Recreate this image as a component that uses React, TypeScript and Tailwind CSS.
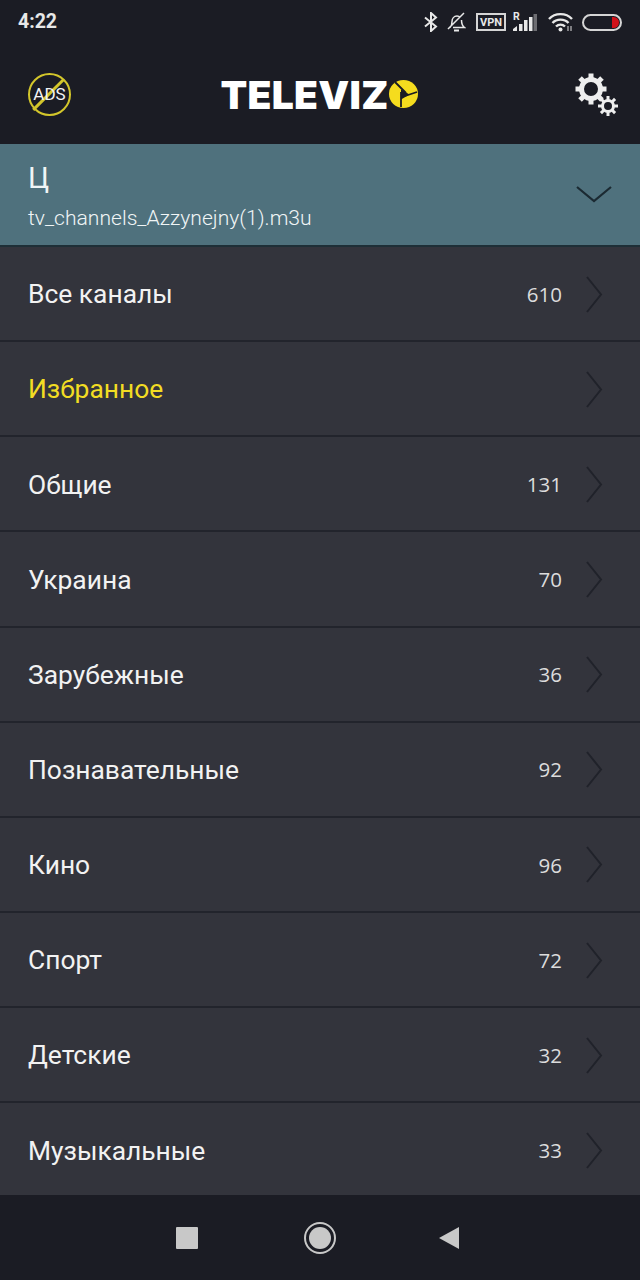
const rows = [
  { name: "Все каналы", count: "610" },
  { name: "Избранное", count: "", fav: true },
  { name: "Общие", count: "131" },
  { name: "Украина", count: "70" },
  { name: "Зарубежные", count: "36" },
  { name: "Познавательные", count: "92" },
  { name: "Кино", count: "96" },
  { name: "Спорт", count: "72" },
  { name: "Детские", count: "32" },
  { name: "Музыкальные", count: "33" },
];

function StatusBar() {
  return (
    <div className="flex h-[44px] items-center justify-between pl-[18px] pr-[18px] text-[#e8e8e8]">
      <span className="text-[19.5px] font-bold">4:22</span>
      <div className="flex items-center">
        <svg width="14" height="20" viewBox="0 0 14 20" fill="none" stroke="currentColor" strokeWidth="2">
          <path d="M1 5.5l11 9-5 4.5V1l5 4.5-11 9" />
        </svg>
        <svg className="ml-[9px]" width="19" height="20" viewBox="0 0 19 20" fill="none" stroke="currentColor" strokeWidth="1.5">
          <path d="M1 17L17 1M3 15.5c1.500-1.500 2-3 2-6 0-3 2-5.500 5-5.500 1.500 0 2.500.5 3.500 1.500M14.500 8c0 3.500 1 6 3 7.500H6" />
          <path d="M7 18.500h5" strokeWidth="2" />
        </svg>
        <div className="ml-[10px] flex h-[18px] w-[30px] items-center justify-center border-[2px] border-[#d5d5d5] text-[11px] font-bold leading-none">
          VPN
        </div>
        <div className="relative ml-[7px] h-[20px] w-[24px]">
          <span className="absolute left-0 top-[-3px] text-[10.5px] font-bold">R</span>
          <svg width="24" height="20" viewBox="0 0 24 20" fill="currentColor">
            <path d="M0 19v-2l4-3v5zM6 19v-7h3.500v7zM11 19V8h3.500v11zM16 19V5h3.500v14z" />
            <path d="M20.500 19V2H24v17z" opacity="0.4" />
          </svg>
        </div>
        <svg className="ml-[11px]" width="25" height="20" viewBox="0 0 25 20" fill="none" stroke="currentColor" strokeWidth="2.4">
          <path d="M1 7c6-6.500 17-6.500 23 0M4.500 11c4-4.500 12-4.500 16 0M8 14.500c2.500-2.500 6.500-2.500 9 0" />
          <circle cx="12.500" cy="17.500" r="2" fill="currentColor" stroke="none" />
          <path d="M20 14v5M23 14v5" strokeWidth="1.600" opacity="0.6" />
        </svg>
        <div className="ml-[9px] flex h-[17px] w-[40px] items-center justify-end overflow-hidden rounded-full border-[2px] border-[#d5d5d5] pr-[1px]">
          <div className="h-[11px] w-[7px] rounded-r-full bg-[#d2121a]" />
        </div>
      </div>
    </div>
  );
}

function Gears() {
  const teeth = [0, 45, 90, 135, 180, 225, 270, 315];
  return (
    <svg width="46" height="46" viewBox="0 0 46 46" fill="none" stroke="#eeeeee">
      <circle cx="17" cy="18" r="9.500" strokeWidth="5" />
      {teeth.map((a) => (
        <path key={a} d="M17 2.500v5" strokeWidth="5" transform={`rotate(${a} 17 18)`} />
      ))}
      <circle cx="34" cy="35" r="5.500" strokeWidth="3" />
      {teeth.map((a) => (
        <path key={a} d="M34 25v4" strokeWidth="3" transform={`rotate(${a} 34 35)`} />
      ))}
    </svg>
  );
}

function Header() {
  return (
    <div className="flex h-[100px] items-center justify-between pl-[28px] pr-[20px]">
      <div className="relative flex h-[43px] w-[43px] items-center justify-center rounded-full border-[2.5px] border-[#d3c62b]">
        <div className="absolute left-[17px] top-[-2px] h-[43px] w-[2.5px] rotate-45 bg-[#d3c62b]" />
        <span className="relative text-[17px] leading-none text-[#f4f4f4]">ADS</span>
      </div>
      <div
        className="mr-[7px] flex items-center text-[39px] font-black leading-none tracking-[0.3px] text-white"
        style={{ fontFamily: "Inter, sans-serif" }}
      >
        TELEVIZ
        <svg width="29" height="28" viewBox="0 0 29 28">
          <ellipse cx="14.500" cy="14" rx="14.500" ry="14" fill="#f5dc1e" />
          <path d="M12 9.500v10l8.500-5z" fill="#1b1c24" />
          <path d="M6 2l11 11M28 12l-12 4M12 27V12" stroke="#1b1c24" strokeWidth="1.800" fill="none" />
        </svg>
      </div>
      <Gears />
    </div>
  );
}

function Row({ name, count, fav }: { name: string; count: string; fav?: boolean }) {
  return (
    <div className="flex h-[95.15px] shrink-0 items-center border-b-[2px] border-[#22242c] pl-[28px] pr-[37px] pt-[3px]">
      <span className={"flex-1 text-[26.4px] " + (fav ? "text-[#f2dc23]" : "text-[#f2f2f2]")}>{name}</span>
      <span className="mr-[23px] -mt-[2px] text-[20.5px] text-[#dcdcdc]" style={{ fontFamily: "'Open Sans', sans-serif" }}>
        {count}
      </span>
      <svg className="-mt-[2px]" width="18" height="37" viewBox="0 0 18 37" fill="none" stroke="#20222a" strokeWidth="2">
        <path d="M2 1l14 17.500L2 36" />
      </svg>
    </div>
  );
}

export default function App() {
  return (
    <div
      className="flex h-[1280px] w-[640px] flex-col overflow-hidden bg-[#1b1c24]"
      style={{ fontFamily: "Roboto, sans-serif" }}
    >
      <StatusBar />
      <Header />
      <div className="flex h-[103px] shrink-0 justify-between border-b-[2px] border-[#1e2f37] bg-[#4f717d] pl-[28px] pr-[28px]">
        <div className="pt-[16px] text-[#f0f5f6]">
          <div className="text-[29px] leading-[36px]">Ц</div>
          <div className="mt-[7px] text-[21.1px] font-light leading-[30px]">tv_channels_Azzynejny(1).m3u</div>
        </div>
        <svg className="self-center" width="36" height="18" viewBox="0 0 36 18" fill="none" stroke="#1b2a32" strokeWidth="2.2">
          <path d="M1 1l17 14L35 1" />
        </svg>
      </div>
      <div className="flex-1 overflow-hidden bg-[#33343c]">
        {rows.map((r) => (
          <Row key={r.name} {...r} />
        ))}
      </div>
      <div className="flex h-[85px] shrink-0 items-center justify-center pr-[4px]">
        <div className="h-[22px] w-[22px] rounded-[1px] bg-[#c8c8c8]" />
        <div className="ml-[106px] flex h-[32px] w-[32px] items-center justify-center rounded-full border-[2px] border-[#c8c8c8]">
          <div className="h-[22px] w-[22px] rounded-full bg-[#c8c8c8]" />
        </div>
        <svg className="ml-[102px]" width="22" height="24" viewBox="0 0 22 24" fill="#c8c8c8">
          <path d="M21 1v22L1 12z" />
        </svg>
      </div>
    </div>
  );
}
